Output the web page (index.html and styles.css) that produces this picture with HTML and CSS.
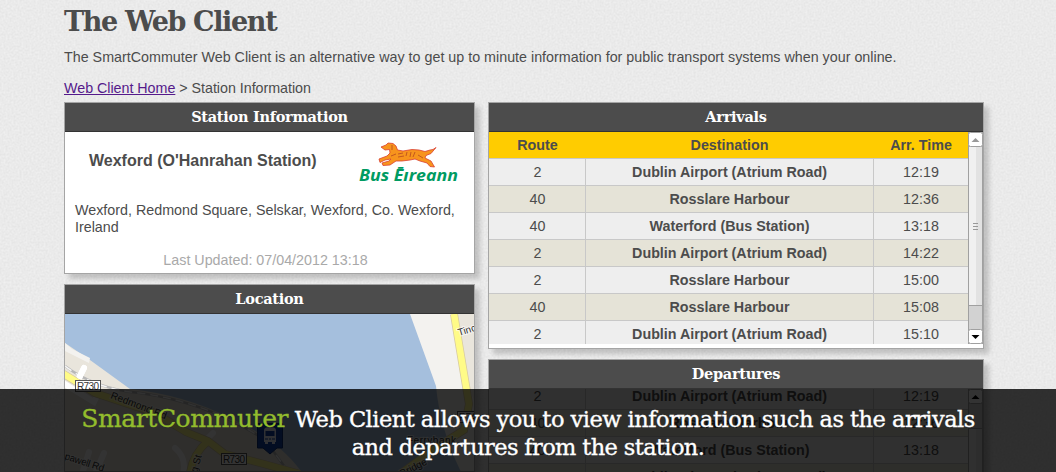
FILE: index.html
```html
<!DOCTYPE html>
<html lang="en">
<head>
<meta charset="utf-8">
<title>The Web Client</title>
<link rel="stylesheet" href="styles.css">
</head>
<body>
<svg class="paper" width="1056" height="472" aria-hidden="true">
  <filter id="grain" x="0" y="0" width="100%" height="100%" color-interpolation-filters="sRGB">
    <feTurbulence type="fractalNoise" baseFrequency="0.5" numOctaves="2" seed="4"/>
    <feColorMatrix values="0.07 0 0 0 0.883  0.07 0 0 0 0.883  0.07 0 0 0 0.883  0 0 0 0 1"/>
  </filter>
  <rect width="1056" height="472" filter="url(#grain)"/>
</svg>
<main class="page">
  <h1 class="title"><span>The Web Client</span></h1>
  <p class="intro">The SmartCommuter Web Client is an alternative way to get up to minute information for public transport systems when your online.</p>
  <p class="crumbs"><a href="#">Web Client Home</a> &gt; Station Information</p>
  <div class="columns">
    <div class="col left">
      <section class="panel station">
        <h2 class="head"><span>Station Information</span></h2>
        <div class="station-top">
          <h3 class="name">Wexford (O'Hanrahan Station)</h3>
          <svg class="logo" width="104" height="46" viewBox="0 0 104 46">
            <path d="M25 6L30 4 32 2 37 2.500 40 5 41.500 9 47 10 56 8.500 63 9 69 10.500 74 9 77 8.500 80 6.500 75 12.500 70 14.500 69 17 75 20 78.500 26 74 25.500 71 22 64 20 59 18 54 19 46 20 40 20 34 24 27 24.500 26 22 33 20 35 18 29 19 24 21.500 23 18 31 15 34 12 33.500 8.500 29 9z" fill="#f7941d" stroke="#d93f30" stroke-width=".8" stroke-linejoin="round"/>
            <path d="M42 13l5-1M42 16l6-1M51 11l-1 4M55 11l-1 5M59 11l-2 5M36 4l0 5M62 14l5 3M35 15l5-2" stroke="#b5471f" stroke-width=".8" fill="none"/>
            <text class="logo-text" x="3" y="39.500" textLength="99" lengthAdjust="spacingAndGlyphs">Bus Ēıreann</text>
          </svg>
        </div>
        <p class="address">Wexford, Redmond Square, Selskar, Wexford, Co. Wexford, Ireland</p>
        <p class="updated">Last Updated: 07/04/2012 13:18</p>
      </section>
      <section class="panel location">
        <h2 class="head"><span>Location</span></h2>
        <svg class="map" width="409" height="158" viewBox="65 314 409 158">
          <path d="M65 314H474V474H65z" fill="#a5bfdd"/>
          <path d="M65 343L90 360 130 389Q185 395 230 418Q280 440 303 474H65z" fill="#e9e5dc"/>
          <path d="M65 343L72 349 90 358 89 363 65 351z" fill="#f3f2ef"/>
          <path d="M410 314H474V474H462Q440 430 436 386z" fill="#f3f2ef"/>
          <path d="M456 314H474V400L466 380z" fill="#e9e5dc"/>
          <path d="M65 366Q95 389 140 393Q210 403 265 440L290 474" fill="none" stroke="#b8b8b8" stroke-width="2.500"/>
          <path d="M65 366Q95 389 140 393Q210 403 265 440L290 474" fill="none" stroke="#f5f5f5" stroke-width="1.500" stroke-dasharray="8 5"/>
          <g fill="none" stroke="#fff" stroke-width="6" stroke-linecap="round"><path d="M63 383L94 402 98 394M84 368L78 380M175 448Q187 458 183 474M89 452L82 474M104 453L95 474M213 433L206 440"/></g>
          <g fill="none" stroke="#d8cba0" stroke-width="8"><path d="M62 373L95 393 155 413 186 432 208 441 225 454 264 464 300 474M208 441Q192 455 190 474M454 314L469 404 464 430 440 445 400 474"/></g>
          <g fill="none" stroke="#fffb87" stroke-width="6.500"><path d="M62 373L95 393 155 413 186 432 208 441 225 454 264 464 300 474M208 441Q192 455 190 474M454 314L469 404 464 430 440 445 400 474"/></g>
          <path d="M84 368L80 376" stroke="#fff" stroke-width="6" stroke-linecap="round"/>
          <g class="map-text">
            <text x="110" y="398" transform="rotate(21 110 398)" textLength="59">Redmond Rd</text>
            <text x="64" y="459" transform="rotate(18 64 459)" textLength="41">pawell Rd</text>
            <text x="197" y="473" transform="rotate(-75 197 473)">g St</text>
            <text x="459" y="336" transform="rotate(-17 459 336)">Tinc</text>
            <text x="407" y="444" textLength="49">Ferrybank</text>
            <text x="402" y="477" transform="rotate(-27 402 477)">Bridge</text>
          </g>
          <g class="shield">
            <rect x="75.500" y="380.500" width="25" height="11"/><text x="77" y="390" textLength="22">R730</text>
            <rect x="221.500" y="453.500" width="25" height="11"/><text x="223" y="463" textLength="22">R730</text>
            <rect x="457.500" y="411.500" width="25" height="11"/><text x="459" y="421" textLength="22">R741</text>
          </g>
          <path d="M257.500 423.500H282.500V448H277L270 454 263 448H257.500z" fill="#1244a8" stroke="#0b2e78"/>
          <path d="M264 430Q264 427 270 427T276 430V442H275V444H272V442H268V444H265V442H264z" fill="#e8eefc"/>
          <path d="M265.500 431H274.500V436H265.500z" fill="#1244a8"/>
          <path d="M265 439H268M272 439H275M269 439H271" stroke="#1244a8"/>
        </svg>
      </section>
    </div>
    <div class="col right">
      <section class="panel arrivals">
        <h2 class="head"><span>Arrivals</span></h2>
        <div class="scroller">
          <div class="table">
            <div class="row th"><b>Route</b><b>Destination</b><b>Arr. Time</b></div>
            <div class="row"><span>2</span><b>Dublin Airport (Atrium Road)</b><span>12:19</span></div>
            <div class="row alt"><span>40</span><b>Rosslare Harbour</b><span>12:36</span></div>
            <div class="row"><span>40</span><b>Waterford (Bus Station)</b><span>13:18</span></div>
            <div class="row alt"><span>2</span><b>Dublin Airport (Atrium Road)</b><span>14:22</span></div>
            <div class="row"><span>2</span><b>Rosslare Harbour</b><span>15:00</span></div>
            <div class="row alt"><span>40</span><b>Rosslare Harbour</b><span>15:08</span></div>
            <div class="row"><span>2</span><b>Dublin Airport (Atrium Road)</b><span>15:10</span></div>
          </div>
          <svg class="bar" width="15" height="212" viewBox="0 0 15 212">
            <path d="M0 0H15V212H0z" fill="#d2d2d2"/>
            <path d="M1 15H8V173H1z" fill="#f0f0f0"/><path d="M8 15H14V173H8z" fill="#e2e2e2"/>
            <path d="M0 173.500H15M.5 0V212M14.500 0V212" stroke="#a0a0a0"/>
            <rect x=".5" y=".5" width="14" height="14" rx="2" fill="#fff" stroke="#a0a0a0"/>
            <rect x=".5" y="197.500" width="14" height="14" rx="2" fill="#fff" stroke="#a0a0a0"/>
            <path d="M3.500 10H11.500L7.500 6z" fill="#999"/><path d="M3.500 203H11.500L7.500 207z" fill="#000"/>
            <path d="M5 91.500H10M5 94.500H10M5 97.500H10" stroke="#999"/>
          </svg>
        </div>
      </section>
      <section class="panel departures">
        <h2 class="head"><span>Departures</span></h2>
        <div class="scroller">
          <div class="table scrolled">
            <div class="row"><span>2</span><b>Dublin Airport (Atrium Road)</b><span>12:19</span></div>
            <div class="row alt"><span>40</span><b>Rosslare Harbour</b><span>12:36</span></div>
            <div class="row"><span>40</span><b>Waterford (Bus Station)</b><span>13:18</span></div>
            <div class="row alt"><span>2</span><b>Dublin Airport (Atrium Road)</b><span>14:22</span></div>
          </div>
          <svg class="bar" width="15" height="212" viewBox="0 0 15 212">
            <path d="M0 0H15V212H0z" fill="#d2d2d2"/>
            <path d="M1 39H8V212H1z" fill="#f0f0f0"/><path d="M8 39H14V212H8z" fill="#e2e2e2"/>
            <path d="M0 39.500H15M.5 0V212M14.500 0V212" stroke="#a0a0a0"/>
            <rect x=".5" y=".5" width="14" height="14" rx="2" fill="#fff" stroke="#a0a0a0"/>
            <path d="M3.500 10H11.500L7.500 6z" fill="#000"/>
          </svg>
        </div>
      </section>
    </div>
  </div>
</main>
<div class="caption">
  <p class="line one"><em>SmartCommuter</em> Web Client allows you to view information such as the arrivals</p>
  <p class="line two">and departures from the station.</p>
</div>
</body>
</html>
```
FILE: styles.css
```css
* { box-sizing: border-box; margin: 0; padding: 0; }
html { overflow: hidden; }
body { width: 1056px; height: 472px; overflow: hidden; position: relative; background: #e9e9e9; color: #4c4c4c; font: 14.3px/17px "Liberation Sans", Arial, sans-serif; }
.paper { position: absolute; top: 0; left: 0; }
.page { position: relative; padding-left: 64px; width: 1056px; height: 472px; overflow: hidden; }
.title { height: 40px; padding-top: 4px; font: bold 27px/36px "DejaVu Serif", serif; letter-spacing: -1.35px; white-space: nowrap; }
.intro { padding-top: 9px; white-space: nowrap; }
.crumbs { padding-top: 14px; letter-spacing: -.03px; }
.crumbs a { color: #551a8b; }
.columns { display: flex; gap: 13px; margin-top: 5px; }
.col { display: flex; flex-direction: column; gap: 10px; }
.left { width: 411px; }
.right { width: 496px; }
.panel { background: #fff; border: 1px solid #a5a5a5; box-shadow: 5px 5px 5px rgba(0,0,0,.18); overflow: hidden; }
.head { height: 29px; background: #4c4c4c; border-bottom: 1px solid #333; color: #fff; text-align: center; font: bold 14.5px/27px "DejaVu Serif", serif; letter-spacing: -.28px; }
.station { height: 172px; }
.station-top { display: flex; padding: 9px 0 0 24px; height: 70px; }
.name { width: 267px; font-size: 16px; line-height: 19px; padding-top: 10px; }
.logo-text { font: italic bold 16px "Open Sans", sans-serif; fill: #009b62; }
.address { padding: 0 10px; }
.updated { padding: 16px 8px 0 0; text-align: center; color: #a9a9a9; }
.location { height: 188px; }
.map { display: block; }
.map-text, .shield { font: 10px "Liberation Sans", sans-serif; fill: #333; }
.map-text text { paint-order: stroke; stroke: #fff; stroke-width: 2px; stroke-opacity: .6; }
.shield rect { fill: #fff; stroke: #555; }
.arrivals { height: 247px; }
.departures { height: 247px; }
.scroller { display: flex; height: 212px; overflow: hidden; }
.table { width: 479px; flex: none; }
.scrolled { margin-top: -6px; }
.row { display: grid; grid-template-columns: 96px 288px 95px; height: 27px; line-height: 26px; text-align: center; background: #eee; border-bottom: 1px solid #c8c8c8; }
.row > :first-child { padding-left: 1px; }
.row > * + * { border-left: 1px solid #c8c8c8; }
.alt { background: #e5e3d7; }
.th { background: #fc0; }
.row.th > * { border-color: #fc0; }
.caption { position: absolute; top: 389px; left: 0; width: 1056px; height: 83px; padding-top: 16px; background: rgba(0,0,0,.8); color: #fff; text-align: center; font: 22.5px/28px "DejaVu Serif", serif; -webkit-text-stroke: .35px currentColor; }
.line { white-space: nowrap; height: 28px; }
.one { letter-spacing: -.52px; }
.two { letter-spacing: -.63px; }
.caption em { font-style: normal; font-size: 25px; letter-spacing: -.4px; color: #93bc2d; }
```
